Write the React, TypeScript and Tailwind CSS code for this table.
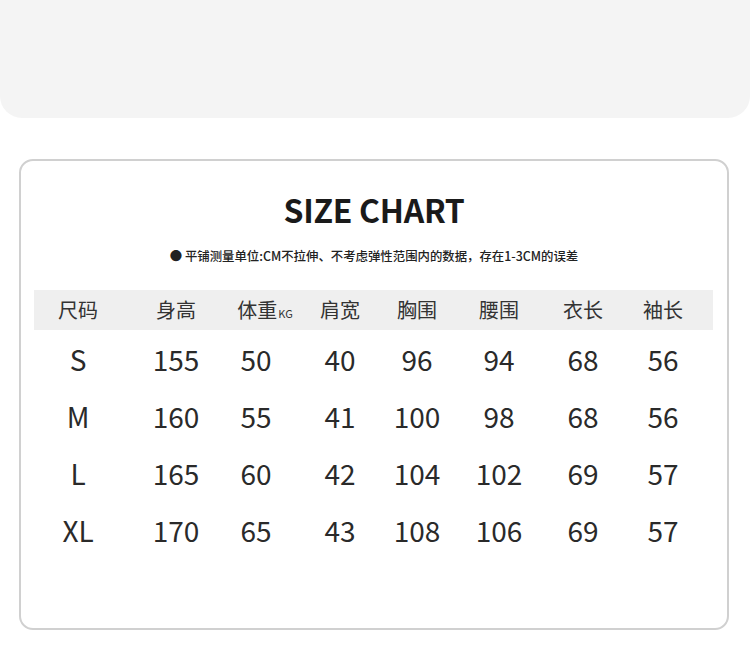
import React from 'react';

const font = { fontFamily: '"Noto Sans CJK SC", "Noto Sans", sans-serif' };

const HEADERS = ['尺码', '身高', '体重', '肩宽', '胸围', '腰围', '衣长', '袖长'];

const ROWS = [
  ['S', '155', '50', '40', '96', '94', '68', '56'],
  ['M', '160', '55', '41', '100', '98', '68', '56'],
  ['L', '165', '60', '42', '104', '102', '69', '57'],
  ['XL', '170', '65', '43', '108', '106', '69', '57'],
];

const cols = 'grid grid-cols-[88px_108px_52px_116px_38px_126px_42px_118px]';

export default function App() {
  return (
    <div className="w-[750px] h-[648px] bg-white overflow-hidden text-[#2a2a2a]" style={font}>
      {/* top panel */}
      <div className="h-[118px] bg-[#f4f4f4] rounded-b-[22px]" />

      {/* size chart card */}
      <div className="mt-[41px] ml-[19px] mr-[21px] h-[471px] border-2 border-[#d0d0d0] rounded-[14px] flex flex-col">
        <h1 className="mt-[32px] text-center text-[32px] leading-none font-bold text-[#1a1a1a] tracking-[-0.3px]">
          SIZE CHART
        </h1>
        <p className="mt-[25px] text-center text-[12.4px] leading-none font-medium text-[#222]">
          ●&nbsp;平铺测量单位:CM不拉伸、不考虑弹性范围内的数据，存在1-3CM的误差
        </p>

        <div className="mt-[28px] ml-[13px] mr-[14px] overflow-hidden">
          {/* header row */}
          <div className={`${cols} h-[40px] bg-[#efefef]`}>
            {HEADERS.map((h, i) => (
              <div key={h} className="flex items-center justify-center whitespace-nowrap text-[20px] leading-none text-[#333]">
                {i === 2 ? (
                  <span className="pl-[18px]">
                    {h}
                    <span className="text-[11px] ml-[1px]">KG</span>
                  </span>
                ) : (
                  h
                )}
              </div>
            ))}
          </div>

          {/* data rows */}
          {ROWS.map((row) => (
            <div key={row[0]} className={`${cols} h-[57px]`}>
              {row.map((v, i) => (
                <div key={i} className="flex items-center justify-center whitespace-nowrap text-[28px] leading-none text-[#2a2a2a]">
                  {v}
                </div>
              ))}
            </div>
          ))}
        </div>
      </div>
    </div>
  );
}
